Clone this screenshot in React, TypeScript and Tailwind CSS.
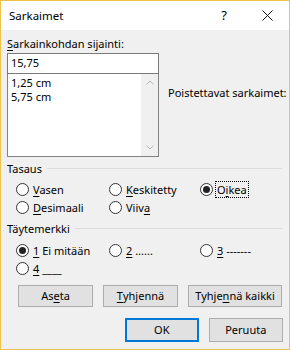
import React from 'react';

const font = { fontFamily: '"Noto Sans", "Liberation Sans", sans-serif' };

function U({ children }: { children: React.ReactNode }) {
  return <span className="underline underline-offset-2">{children}</span>;
}

function Radio({ checked, children, focus }: { checked?: boolean; children: React.ReactNode; focus?: boolean }) {
  return (
    <div className="flex items-center h-[18px] whitespace-nowrap">
      <span className="w-[13px] h-[13px] rounded-full border border-[#333] bg-white flex items-center justify-center flex-shrink-0">
        {checked && <span className="w-[7px] h-[7px] rounded-full bg-[#222]" />}
      </span>
      <span
        className={
          'ml-[3px] px-[1px] leading-[15px] ' +
          (focus ? 'outline outline-1 outline-dotted outline-black' : '')
        }
      >
        {children}
      </span>
    </div>
  );
}

function Btn({ children, w, primary }: { children: React.ReactNode; w: string; primary?: boolean }) {
  return (
    <div
      className={
        'flex items-center justify-center bg-[#e1e1e1] whitespace-nowrap ' +
        w +
        (primary ? ' border-2 border-[#0078d7]' : ' border border-[#adadad]')
      }
    >
      {children}
    </div>
  );
}

function Group({ title }: { title: string }) {
  return (
    <div className="flex items-center h-[15px]">
      <span className="leading-[15px]">{title}</span>
      <span className="h-px bg-[#dcdcdc] flex-1 ml-[5px] mr-[1px]" />
    </div>
  );
}

export default function App() {
  return (
    <div
      style={font}
      className="w-[290px] h-[350px] border border-[#eec34b] bg-[#f0f0f0] flex flex-col text-[11px] text-black"
    >
      <div className="h-[29px] bg-white flex items-center flex-shrink-0">
        <span className="ml-[8px] text-[11.5px]">Sarkaimet</span>
        <span className="ml-auto text-[13px] mr-[35px]">?</span>
        <svg width="11" height="11" viewBox="0 0 11 11" className="mr-[16px]">
          <path d="M0.5 0.5 L10.5 10.5 M10.5 0.5 L0.5 10.5" stroke="#111" strokeWidth="1" />
        </svg>
      </div>

      <div className="px-[6px] flex flex-col">
        <div className="mt-[6px] leading-[15px] whitespace-nowrap">
          <U>S</U>arkainkohdan sijainti:
        </div>
        <div className="flex mt-[2px]">
          <div className="w-[152px] flex flex-col flex-shrink-0">
            <div className="h-[21px] bg-white border border-[#7a7a7a] flex items-center pl-[3px]">15,75</div>
            <div className="h-[83px] bg-white border border-[#828282] border-t-0 flex">
              <div className="flex-1 pl-[3px] pt-[2px] leading-[14px]">
                <div>1,25 cm</div>
                <div>5,75 cm</div>
              </div>
              <div className="w-[17px] bg-[#f0f0f0] flex flex-col items-center justify-between py-[6px]">
                <svg width="8" height="5" viewBox="0 0 8 5">
                  <path d="M0.5 4.5 L4 1 L7.5 4.5" stroke="#b5b5b5" fill="none" />
                </svg>
                <svg width="8" height="5" viewBox="0 0 8 5">
                  <path d="M0.5 0.5 L4 4 L7.5 0.5" stroke="#b5b5b5" fill="none" />
                </svg>
              </div>
            </div>
          </div>
          <div className="ml-[9px] mt-[32px] leading-[15px] whitespace-nowrap">Poistettavat sarkaimet:</div>
        </div>

        <div className="mt-[4px]">
          <Group title="Tasaus" />
        </div>
        <div className="grid grid-cols-[93px_91px_1fr] pl-[9px] mt-[4px]">
          <Radio><U>V</U>asen</Radio>
          <Radio><U>K</U>eskitetty</Radio>
          <Radio checked focus>O<U>i</U>kea</Radio>
          <Radio><U>D</U>esimaali</Radio>
          <Radio>Viiv<U>a</U></Radio>
        </div>

        <div className="mt-[5px]">
          <Group title="Täytemerkki" />
        </div>
        <div className="grid grid-cols-[93px_91px_1fr] pl-[9px] mt-[5px]">
          <Radio checked><U>1</U> Ei mitään</Radio>
          <Radio><U>2</U> ......</Radio>
          <Radio><U>3</U> -------</Radio>
          <Radio><U>4</U> ____</Radio>
        </div>

        <div className="flex gap-[10px] pl-[11px] mt-[8px] h-[22px]">
          <Btn w="w-[75px]">As<U>e</U>ta</Btn>
          <Btn w="w-[75px]"><U>T</U>yhjennä</Btn>
          <Btn w="w-[94px]">Tyhje<U>n</U>nä kaikki</Btn>
        </div>
        <div className="flex gap-[10px] pl-[118px] mt-[11px] h-[24px]">
          <Btn w="w-[74px]" primary>OK</Btn>
          <Btn w="w-[75px]">Peruuta</Btn>
        </div>
      </div>
    </div>
  );
}
